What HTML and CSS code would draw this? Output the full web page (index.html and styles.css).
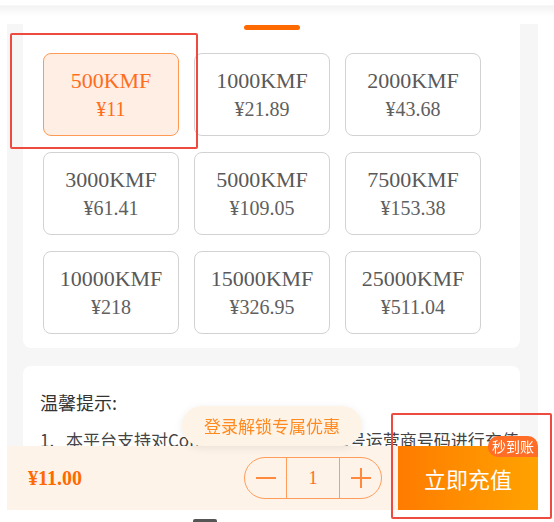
FILE: index.html
```html
<!DOCTYPE html>
<html lang="zh-CN">
<head>
    <meta charset="UTF-8">
    <meta name="viewport" content="width=device-width, initial-scale=1.0">
    <title>充值</title>
    <link rel="stylesheet" href="styles.css">
</head>
<body>
    <div class="top-shade"></div>

    <div class="page">
        <div class="card pack-card">
            <div class="tab-line"></div>
            <div class="pack-grid">
                <div class="pack active">
                    <div class="pack-name">500KMF</div>
                    <div class="pack-price">¥11</div>
                </div>
                <div class="pack">
                    <div class="pack-name">1000KMF</div>
                    <div class="pack-price">¥21.89</div>
                </div>
                <div class="pack">
                    <div class="pack-name">2000KMF</div>
                    <div class="pack-price">¥43.68</div>
                </div>
                <div class="pack">
                    <div class="pack-name">3000KMF</div>
                    <div class="pack-price">¥61.41</div>
                </div>
                <div class="pack">
                    <div class="pack-name">5000KMF</div>
                    <div class="pack-price">¥109.05</div>
                </div>
                <div class="pack">
                    <div class="pack-name">7500KMF</div>
                    <div class="pack-price">¥153.38</div>
                </div>
                <div class="pack">
                    <div class="pack-name">10000KMF</div>
                    <div class="pack-price">¥218</div>
                </div>
                <div class="pack">
                    <div class="pack-name">15000KMF</div>
                    <div class="pack-price">¥326.95</div>
                </div>
                <div class="pack">
                    <div class="pack-name">25000KMF</div>
                    <div class="pack-price">¥511.04</div>
                </div>
            </div>
        </div>

        <div class="card tips-card">
            <div class="tips-title">温馨提示:</div>
            <div class="tip"><span class="tip-num">1.</span><span>本平台支持对Congstar、O2、Lebara号运营商号码进行充值</span></div>
            <div class="tip"><span class="tip-num">2.</span><span>充值成功后一般秒到账，请耐心等待</span></div>
        </div>
    </div>

    <!-- 底部购买栏 -->
    <div class="footer">
        <div class="toast">登录解锁专属优惠</div>
        <div class="buy-bar">
            <div class="total">¥11.00</div>
            <div class="stepper">
                <div class="step-btn">
                    <svg width="20" height="20" viewBox="0 0 20 20"><line x1="0" y1="10" x2="20" y2="10" stroke="#ff8a3d" stroke-width="2"/></svg>
                </div>
                <div class="step-num">1</div>
                <div class="step-btn">
                    <svg width="20" height="20" viewBox="0 0 20 20"><line x1="0" y1="10" x2="20" y2="10" stroke="#ff8a3d" stroke-width="2"/><line x1="10" y1="0" x2="10" y2="20" stroke="#ff8a3d" stroke-width="2"/></svg>
                </div>
            </div>
            <div class="pay-button">
                立即充值
                <span class="badge">秒到账</span>
            </div>
        </div>
        <div class="home-strip"><div class="home-bar"></div></div>
    </div>

    <!-- 标注框 -->
    <div class="mark mark-pack"></div>
    <div class="mark mark-pay"></div>
</body>
</html>
```

FILE: styles.css
```css
body {
    margin: 0;
    padding: 0;
    background: #fff;
    font-family: "Noto Sans CJK SC", "Noto Sans", sans-serif;
    overflow: hidden;
    height: 522px;
}
.top-shade {
    height: 24px;
    background: linear-gradient(#fff 0, #fff 5px, #f3f3f3 6px, #fff 16px);
}
.page {
    margin-left: 7px;
    width: 531px;
    box-sizing: border-box;
    padding: 0 18px 0 16px;
    background: #f6f6f6;
    min-height: 498px;
}
.card {
    background: #fff;
    border-radius: 8px;
}
.pack-card {
    border-radius: 0 0 8px 8px;
    padding: 1px 0 14px 20px;
}
.tab-line {
    width: 56px;
    height: 5px;
    border-radius: 3px;
    background: #ff6a00;
    margin: 0 auto;
    position: relative;
    left: -10px;
}
.pack-grid {
    display: grid;
    grid-template-columns: repeat(3, 136px);
    grid-auto-rows: 83px;
    gap: 16px 15px;
    margin-top: 23px;
}
.pack {
    box-sizing: border-box;
    border: 1px solid #d2d2d2;
    border-radius: 8px;
    display: flex;
    flex-direction: column;
    justify-content: center;
    align-items: center;
    font-family: "Liberation Serif", serif;
    color: #595959;
}
.pack-name {
    font-size: 22px;
    line-height: 28px;
}
.pack-price {
    font-size: 20px;
    line-height: 28px;
    color: #606060;
}
.pack.active {
    border-color: #ff9a55;
    background: #feeee3;
}
.pack.active .pack-name,
.pack.active .pack-price {
    color: #ff6d1c;
}
.tips-card {
    margin-top: 18px;
    padding: 24px 17px;
    color: #333;
    overflow: hidden;
}
.tips-title {
    font-size: 18px;
    line-height: 24px;
    margin-bottom: 14px;
}
.tip {
    display: flex;
    font-size: 17px;
    line-height: 24px;
    color: #444;
    margin-bottom: 8px;
    white-space: nowrap;
}
.tip-num {
    width: 26px;
    flex-shrink: 0;
}
.footer {
    position: fixed;
    left: 7px;
    bottom: 0;
    width: 531px;
    background: #fff;
}
.toast {
    position: absolute;
    left: 175px;
    bottom: 76px;
    width: 180px;
    height: 40px;
    border-radius: 20px;
    background: #fef3e7;
    box-shadow: 0 2px 8px rgba(0, 0, 0, 0.08);
    color: #ff8a1f;
    font-size: 17px;
    line-height: 40px;
    text-align: center;
}
.buy-bar {
    height: 64px;
    background: #fef3e8;
    display: flex;
    align-items: center;
    padding-left: 21px;
}
.total {
    font-family: "Liberation Serif", serif;
    font-weight: bold;
    font-size: 20px;
    color: #ff6a00;
}
.stepper {
    margin-left: auto;
    display: flex;
    height: 42px;
    width: 138px;
    box-sizing: border-box;
    border: 1px solid #ff9d5c;
    border-radius: 21px;
}
.step-btn {
    width: 41px;
    display: flex;
    align-items: center;
    justify-content: center;
}
.step-num {
    flex: 1;
    border-left: 1px solid #ff9d5c;
    border-right: 1px solid #ff9d5c;
    text-align: center;
    line-height: 40px;
    font-family: "Liberation Serif", serif;
    font-size: 18px;
    color: #ff6d1c;
}
.pay-button {
    position: relative;
    margin-left: 16px;
    width: 140px;
    height: 64px;
    background: linear-gradient(90deg, #ff7b00, #ffa300);
    color: #fff;
    font-size: 22px;
    display: flex;
    align-items: center;
    justify-content: center;
}
.badge {
    position: absolute;
    top: -10px;
    right: 0;
    width: 50px;
    height: 21px;
    border-radius: 10px 10px 0 10px;
    background: #ff6d26;
    font-size: 14px;
    line-height: 21px;
    text-align: center;
}
.home-strip {
    height: 12px;
    box-sizing: border-box;
    padding: 9px 0 0 186px;
}
.home-bar {
    width: 24px;
    height: 3px;
    border-radius: 2px 2px 0 0;
    background: #555;
}
.mark {
    position: absolute;
    border: 2px solid #ee4a40;
    border-radius: 2px;
    box-sizing: border-box;
}
.mark-pack {
    left: 10px;
    top: 33px;
    width: 188px;
    height: 116px;
}
.mark-pay {
    left: 391px;
    top: 413px;
    width: 161px;
    height: 106px;
}
```
